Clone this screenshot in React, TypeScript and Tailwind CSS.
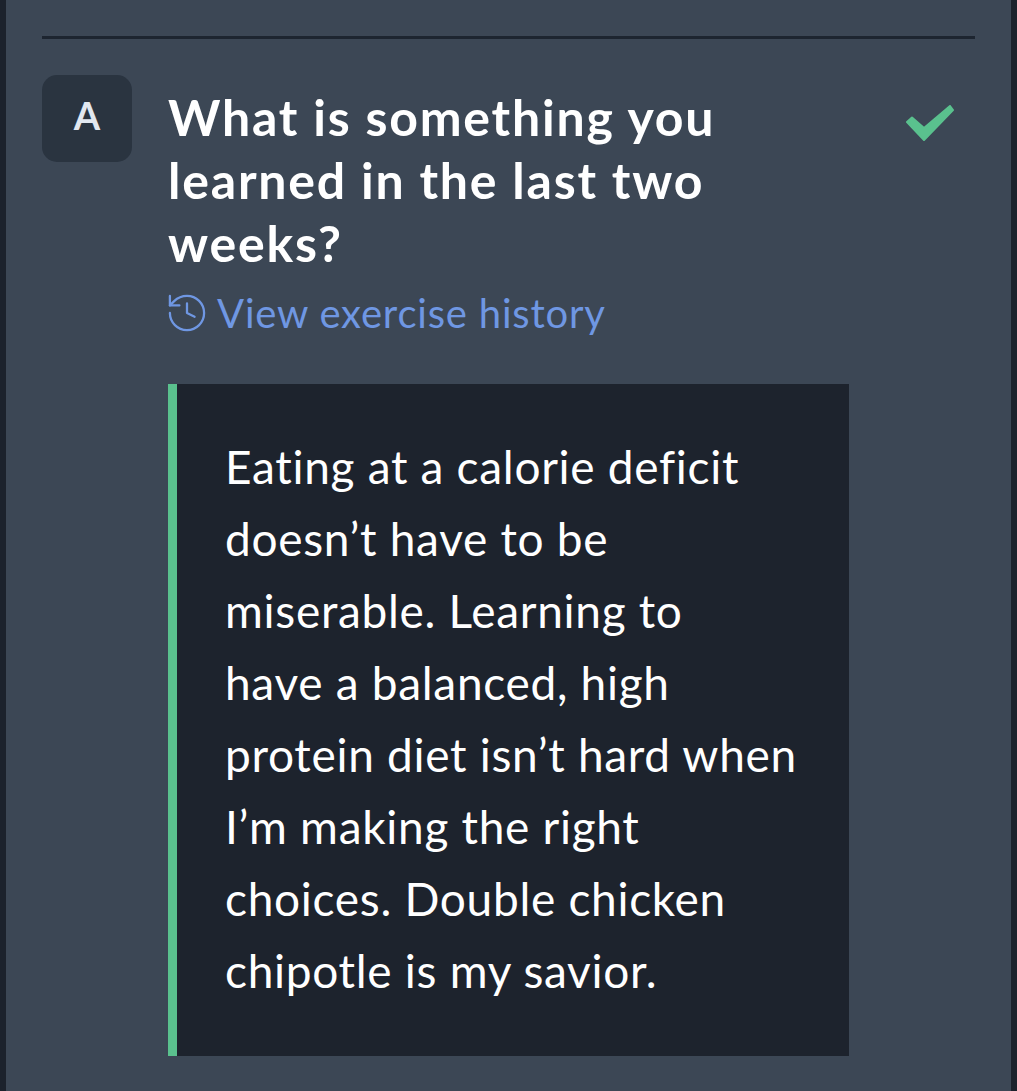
const answer = [
  'Eating at a calorie deficit',
  'doesn’t have to be',
  'miserable. Learning to',
  'have a balanced, high',
  'protein diet isn’t hard when',
  'I’m making the right',
  'choices. Double chicken',
  'chipotle is my savior.',
]

export default function App() {
  return (
    <div className="h-[1091px] w-[1017px] overflow-hidden bg-[#3c4755] border-x-[6px] border-[#1c222c] font-['Lato',sans-serif]">
      <div className="pt-[36px] pl-[36px] pr-[36px]">
        <div className="h-[3px] bg-[#1d2530]" />
        <div className="mt-[36px] flex">
          <div className="flex h-[87px] w-[90px] shrink-0 items-center justify-center rounded-[15px] bg-[#2a3440] pb-[6px] text-[38px] font-bold text-[#e2e8f0]">
            A
          </div>
          <div className="ml-[36px] flex-1">
            <div className="flex items-start justify-between">
              <h2 className="mt-[11px] w-[600px] text-[50px] leading-[63px] font-bold tracking-[1.8px] text-white">
                What is something you learned in the last two weeks?
              </h2>
              <svg className="mt-[30px] mr-[21px] h-[36px] w-[48px] text-[#5ac18e]" viewBox="0 0 48 36" fill="currentColor" stroke="currentColor" strokeWidth="2" strokeLinejoin="round">
                <polygon points="1,17 6,12.5 18,23 44,1 47,5 18,35" />
              </svg>
            </div>
            <a className="mt-[13px] flex items-center text-[40px] leading-[50px] tracking-[0.8px] text-[#6f97e3]">
              <svg className="mr-[11px] h-[38px] w-[38px]" viewBox="2 2 20 20" fill="none" stroke="currentColor" strokeWidth="1.2" strokeLinecap="round" strokeLinejoin="round">
                <path d="M3 12a9 9 0 1 0 9-9 9.75 9.75 0 0 0-6.74 2.74L3 8" />
                <path d="M3 3v5h5" />
                <path d="M12 7v5l4 2" />
              </svg>
              View exercise history
            </a>
            <blockquote className="mt-[46px] w-[681px] border-l-[9px] border-[#5ac18e] bg-[#1d232d] pt-[47px] pb-[49px] pl-[48px] text-[46px] leading-[72px] tracking-[0.7px] text-white">
              {answer.map((line) => (
                <div key={line} className="whitespace-nowrap">{line}</div>
              ))}
            </blockquote>
          </div>
        </div>
      </div>
    </div>
  )
}
